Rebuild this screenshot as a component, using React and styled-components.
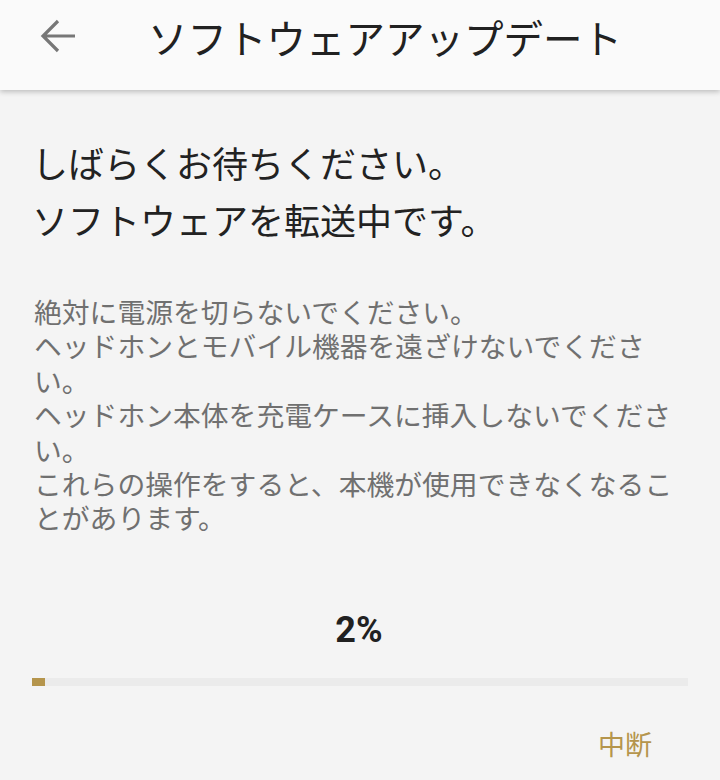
import React from 'react';
import styled, { createGlobalStyle } from 'styled-components';

const GlobalStyle = createGlobalStyle`
  html, body {
    margin: 0;
    padding: 0;
    background: #f4f4f4;
  }
  body {
    font-family: 'Noto Sans CJK JP', 'Noto Sans', sans-serif;
  }
`;

const Screen = styled.div`
  width: 720px;
  height: 780px;
  background: #f4f4f4;
  overflow: hidden;
  display: flex;
  flex-direction: column;
`;

const TopBar = styled.header`
  height: 90px;
  background: #fafafa;
  display: flex;
  align-items: flex-start;
  box-shadow: 0 2px 5px rgba(0, 0, 0, 0.22);
  position: relative;
  z-index: 1;
`;

const BackButton = styled.button`
  width: 40px;
  height: 36px;
  margin: 18px 0 0 38px;
  padding: 0;
  border: none;
  background: transparent;
  display: flex;
  align-items: center;
  justify-content: center;
`;

const Title = styled.h1`
  margin: 0 0 0 70px;
  font-size: 39.5px;
  line-height: 74px;
  font-weight: 400;
  color: #212121;
  letter-spacing: 0;
`;

const Content = styled.main`
  flex: 1;
  display: flex;
  flex-direction: column;
  padding: 44px 34px 0 32px;
`;

const Headline = styled.h2`
  margin: 0;
  font-size: 36px;
  line-height: 57px;
  font-weight: 400;
  color: #222;
`;

const Notice = styled.p`
  margin: 46px 0 0 2px;
  font-size: 27.8px;
  line-height: 34.4px;
  color: #707070;
  width: 652px;
`;

const Percent = styled.div`
  margin-top: 74px;
  text-align: center;
  font-family: Roboto, 'Noto Sans', sans-serif;
  font-weight: 700;
  font-size: 36px;
  line-height: 42px;
  color: #212121;
`;

const Track = styled.div`
  margin-top: 27px;
  width: 656px;
  height: 8px;
  background: #ebebeb;
`;

const Fill = styled.div`
  height: 100%;
  background: #b5954c;
`;

const Actions = styled.div`
  display: flex;
  justify-content: flex-end;
  margin-top: 40px;
`;

const TextButton = styled.button`
  border: none;
  background: transparent;
  padding: 0;
  margin-right: 34px;
  font-family: 'Noto Sans CJK JP', sans-serif;
  font-size: 27px;
  line-height: 36px;
  color: #b5954c;
`;

const BackArrow = () => (
  <svg width="36" height="34" viewBox="0 0 36 34" fill="none">
    <path d="M35 17H3M18 2L3 17l15 15" stroke="#777" strokeWidth="3.2" />
  </svg>
);

const progress = 2;

export default function App() {
  return (
    <Screen>
      <GlobalStyle />
      <TopBar>
        <BackButton aria-label="戻る">
          <BackArrow />
        </BackButton>
        <Title>ソフトウェアアップデート</Title>
      </TopBar>
      <Content>
        <Headline>
          しばらくお待ちください。
          <br />
          ソフトウェアを転送中です。
        </Headline>
        <Notice>
          絶対に電源を切らないでください。
          <br />
          ヘッドホンとモバイル機器を遠ざけないでください。
          <br />
          ヘッドホン本体を充電ケースに挿入しないでください。
          <br />
          これらの操作をすると、本機が使用できなくなることがあります。
        </Notice>
        <Percent>{progress}%</Percent>
        <Track>
          <Fill style={{ width: `${progress}%` }} />
        </Track>
        <Actions>
          <TextButton>中断</TextButton>
        </Actions>
      </Content>
    </Screen>
  );
}
